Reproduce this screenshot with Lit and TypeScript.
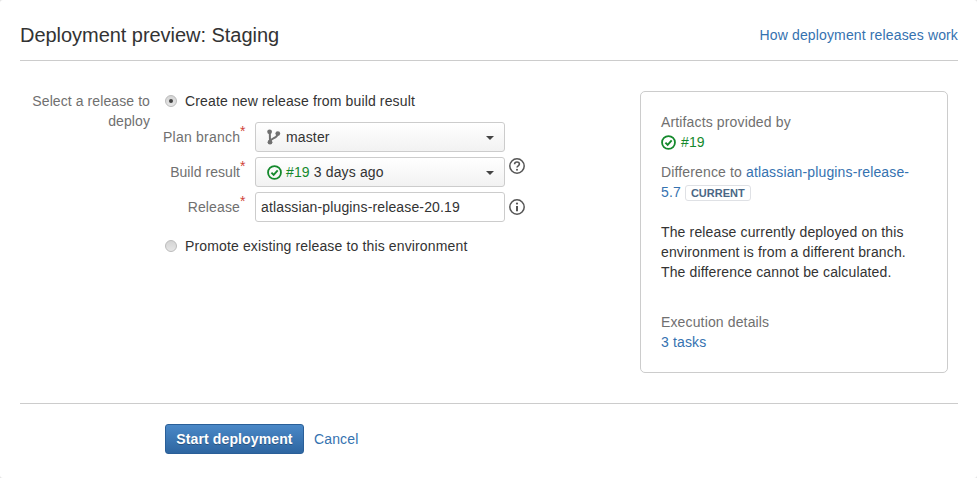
import { LitElement, html, css, svg } from "lit";
import { customElement } from "lit/decorators.js";

const check = html`<svg class="check" width="15" height="15" viewBox="0 0 16 16" fill="none" stroke="#14892c">
  <circle cx="8" cy="8" r="6.9" stroke-width="1.9"></circle>
  <path d="M4.7 8.1 7.1 10.5 11.4 5.8" stroke-width="2"></path>
</svg>`;

const branch = svg`<circle cx="2.6" cy="2.8" r="2.4" fill="#707070"></circle>
  <circle cx="3" cy="13.2" r="2.4" fill="#707070"></circle>
  <circle cx="10.8" cy="4.6" r="2.4" fill="#707070"></circle>
  <path d="M2.8 3 3 13M3 12.4C3.6 8.6 10.2 10 10.8 4.6" fill="none" stroke="#707070" stroke-width="2"></path>`;

@customElement("app-root")
export class AppRoot extends LitElement {
  static styles = css`
    :host {
      display: block;
      width: 977px;
      height: 478px;
      box-sizing: border-box;
      background: #e4e4e4;
      color: #333;
      font-family: "Liberation Sans", Arial, sans-serif;
      font-size: 14px;
      line-height: 20px;
      letter-spacing: 0.14px;
      overflow: hidden;
    }
    a { color: #3572b0; text-decoration: none; }
    .page { padding: 0 19px 0 20px; height: 478px; box-sizing: border-box; background: #fff; border-radius: 3px; }
    .head {
      display: flex;
      justify-content: space-between;
      align-items: center;
      height: 61px;
      padding-top: 9px;
      box-sizing: border-box;
      border-bottom: 1px solid #ccc;
    }
    h2 { margin: 0; font-size: 20px; font-weight: 400; line-height: 30px; letter-spacing: -0.04px; }
    .main {
      display: flex;
      justify-content: space-between;
      height: 342px;
      border-bottom: 1px solid #ccc;
    }
    .form { display: flex; padding-top: 30px; }
    .lead { width: 130px; text-align: right; color: #707070; letter-spacing: 0.09px; }
    .opts { margin-left: 15px; }
    .radio { display: flex; align-items: center; gap: 8px; height: 20px; }
    .dot {
      width: 12px; height: 12px; border-radius: 50%;
      box-sizing: border-box;
      border: 1px solid #bbb;
      background: linear-gradient(#d4d4d4, #e6e6e6);
      display: flex; align-items: center; justify-content: center;
    }
    .dot.on::after { content: ""; width: 4px; height: 4px; border-radius: 50%; background: #444; }
    .fields { display: grid; grid-template-columns: 77px 250px 26px; column-gap: 15px; row-gap: 5px; margin: 11px 0 14px -2px; }
    .lab { text-align: right; color: #707070; position: relative; line-height: 30px; white-space: nowrap; }
    .lab.wide { letter-spacing: 0.22px; }
    .lab.tight { letter-spacing: 0.05px; }
    .lab b { position: absolute; left: 100%; top: -6px; color: #d04437; font-weight: 400; font-size: 14px; }
    .ctl {
      height: 30px;
      box-sizing: border-box;
      border: 1px solid #ccc;
      border-radius: 3.01px;
      display: flex;
      align-items: center;
      white-space: nowrap;
    }
    .sel { background: linear-gradient(#fff, #f2f2f2); padding-left: 11px; position: relative; }
    .sel::after {
      content: ""; position: absolute; right: 10px; top: 13px;
      border: 4px solid transparent; border-top: 4px solid #444; border-bottom: 0;
    }
    .inp { background: #fff; padding-left: 5px; }
    .sel svg { margin-right: 4px; flex: none; }
    .sel svg.br { margin-right: 5px; }
    .num { color: #14892c; margin-right: 4px; }
    .tip { display: flex; align-items: flex-start; }
    .tip svg { margin: 0 0 0 -12px; }
    .tip.info svg { margin-top: 6px; }
    .panel {
      width: 308px;
      height: 282px;
      margin-top: 30px;
      box-sizing: border-box;
      border: 1px solid #ccc;
      border-radius: 5px;
      padding: 20px;
      margin-right: 10px;
    }
    .panel .muted { color: #707070; }
    .panel p { margin: 0; }
    .panel .build { display: flex; align-items: center; gap: 5px; color: #14892c; }
    .panel .diff { margin-top: 10px; }
    .panel .msg { margin-top: 20px; }
    .panel .exec { margin-top: 30px; }
    .lozenge {
      display: inline-block;
      box-sizing: border-box;
      height: 16px;
      line-height: 14px;
      padding: 0 5px;
      border: 1px solid #dfe1e5;
      border-radius: 3px;
      color: #4a6785;
      font-size: 11px;
      font-weight: 700;
      letter-spacing: 0;
    }
    .foot { display: flex; align-items: center; gap: 10px; padding: 20px 0 0 145px; }
    .btn {
      box-sizing: border-box;
      width: 139px;
      height: 30px;
      border: 1px solid #2a5f98;
      border-radius: 3.01px;
      background: linear-gradient(#4a88c7, #2e66a1);
      color: #fff;
      font: 700 14px/20px "Liberation Sans", Arial, sans-serif;
      letter-spacing: 0.12px;
      text-shadow: 0 1px 0 rgba(0,0,0,.3);
      padding: 0;
    }
  `;

  render() {
    return html`<div class="page">
      <div class="head">
        <h2>Deployment preview: Staging</h2>
        <a href="#">How deployment releases work</a>
      </div>
      <div class="main">
        <div class="form">
          <div class="lead">Select a release to deploy</div>
          <div class="opts">
            <div class="radio"><span class="dot on"></span>Create new release from build result</div>
            <div class="fields">
              <div class="lab wide">Plan branch<b>*</b></div>
              <div class="ctl sel"><svg class="br" width="14" height="16" viewBox="0 0 14 16">${branch}</svg>master</div>
              <div></div>
              <div class="lab tight">Build result<b>*</b></div>
              <div class="ctl sel">${check}<span class="num">#19</span>3 days ago</div>
              <div class="tip"><svg width="18" height="18" viewBox="0 0 18 18" fill="none" stroke="#555">
                <circle cx="9" cy="9" r="7.2" stroke-width="1.5"></circle>
                <path d="M6.6 7.2C6.6 5.8 7.7 5 9 5s2.4.8 2.4 2.1C11.4 8.8 9 8.8 9 10.6" stroke-width="1.6"></path>
                <circle cx="9" cy="12.8" r="1" fill="#555" stroke="none"></circle>
              </svg></div>
              <div class="lab">Release<b>*</b></div>
              <div class="ctl inp">atlassian-plugins-release-20.19</div>
              <div class="tip info"><svg width="18" height="18" viewBox="0 0 18 18" fill="none" stroke="#555">
                <circle cx="9" cy="9" r="7.2" stroke-width="1.5"></circle>
                <circle cx="9" cy="5.6" r="1.1" fill="#555" stroke="none"></circle>
                <path d="M9 8v5.2" stroke-width="2"></path>
              </svg></div>
            </div>
            <div class="radio"><span class="dot"></span>Promote existing release to this environment</div>
          </div>
        </div>
        <div class="panel">
          <p class="muted">Artifacts provided by</p>
          <p class="build">${check}#19</p>
          <p class="diff"><span class="muted">Difference to</span> <a href="#">atlassian-plugins-release-5.7</a> <span class="lozenge">CURRENT</span></p>
          <p class="msg">The release currently deployed on this environment is from a different branch. The difference cannot be calculated.</p>
          <p class="exec muted">Execution details</p>
          <p><a href="#">3 tasks</a></p>
        </div>
      </div>
      <div class="foot">
        <button class="btn">Start deployment</button>
        <a href="#">Cancel</a>
      </div>
    </div>`;
  }
}
